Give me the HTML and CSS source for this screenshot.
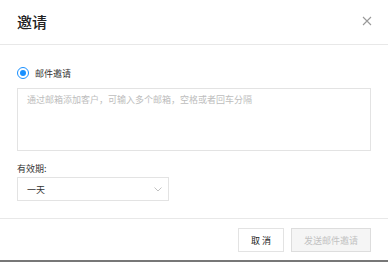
FILE: index.html
```html
<!DOCTYPE html>
<html lang="zh-CN">
<head>
    <meta charset="UTF-8">
    <title>邀请</title>
    <link rel="stylesheet" href="styles.css">
</head>
<body>
    <div class="modal">
        <div class="modal-header">
            <div class="modal-title">邀请</div>
            <button class="modal-close" aria-label="关闭">
                <svg width="10" height="10" viewBox="0 0 10 10">
                    <path d="M1 1L9 9M9 1L1 9" stroke="#999" stroke-width="1.1" fill="none"/>
                </svg>
            </button>
        </div>

        <div class="modal-body">
            <label class="radio">
                <span class="radio-circle"><span class="radio-dot"></span></span>
                <span class="radio-label">邮件邀请</span>
            </label>

            <textarea class="email-input" placeholder="通过邮箱添加客户，可输入多个邮箱，空格或者回车分隔"></textarea>

            <div class="field-label">有效期:</div>
            <div class="select">
                <span class="select-value">一天</span>
                <svg class="select-arrow" width="8" height="5" viewBox="0 0 8 5">
                    <path d="M0.5 0.5L4 4L7.5 0.5" stroke="#bbb" stroke-width="0.9" fill="none"/>
                </svg>
            </div>
        </div>

        <div class="modal-footer">
            <button class="btn">取 消</button>
            <button class="btn btn-disabled" disabled>发送邮件邀请</button>
        </div>
    </div>
</body>
</html>
```

FILE: styles.css
```css
* {
    margin: 0;
    padding: 0;
    box-sizing: border-box;
}

body {
    font-family: "Noto Sans CJK SC", "Noto Sans", sans-serif;
    background: #fff;
    color: #333;
}

.modal {
    width: 388px;
    height: 262px;
    display: flex;
    flex-direction: column;
    border-bottom: 2px solid #777;
}

.modal-header {
    height: 45px;
    padding: 0 16px 0 17px;
    border-bottom: 1px solid #e8e8e8;
    display: flex;
    align-items: center;
    justify-content: space-between;
}

.modal-title {
    font-size: 15px;
    font-weight: 500;
    color: #222;
    margin-top: -2px;
}

.modal-close {
    border: none;
    background: none;
    width: 10px;
    height: 10px;
    display: flex;
    margin-top: -3px;
}

.modal-body {
    padding: 22px 17px 0;
    flex: 1;
}

.radio {
    display: flex;
    align-items: center;
    height: 12px;
}

.radio-circle {
    width: 12px;
    height: 12px;
    border: 1px solid #1890ff;
    border-radius: 50%;
    display: flex;
    align-items: center;
    justify-content: center;
}

.radio-dot {
    width: 6px;
    height: 6px;
    border-radius: 50%;
    background: #1890ff;
}

.radio-label {
    font-size: 9px;
    margin-left: 6px;
    color: #333;
}

.email-input {
    display: block;
    width: 354px;
    height: 63px;
    margin-top: 9px;
    padding: 5px 9px;
    border: 1px solid #e3e3e3;
    font-family: inherit;
    font-size: 9px;
    line-height: 12px;
    resize: none;
    outline: none;
}

.email-input::placeholder {
    color: #bdbdbd;
}

.field-label {
    font-size: 9px;
    line-height: 12px;
    margin-top: 12px;
    color: #333;
}

.select {
    width: 152px;
    height: 24px;
    margin-top: 2px;
    border: 1px solid #e3e3e3;
    padding: 0 6px 0 9px;
    display: flex;
    align-items: center;
    justify-content: space-between;
}

.select-value {
    font-size: 9px;
}

.modal-footer {
    height: 42px;
    border-top: 1px solid #e8e8e8;
    padding: 9px 17px 0;
    display: flex;
    justify-content: flex-end;
    gap: 7px;
}

.btn {
    height: 24px;
    min-width: 46px;
    padding: 0 9px;
    border: 1px solid #e3e3e3;
    background: #fff;
    font-family: inherit;
    font-size: 9px;
    color: #222;
}

.btn-disabled {
    width: 80px;
    background: #f5f5f5;
    color: #c2c2c2;
    border-color: #ddd;
}
```
